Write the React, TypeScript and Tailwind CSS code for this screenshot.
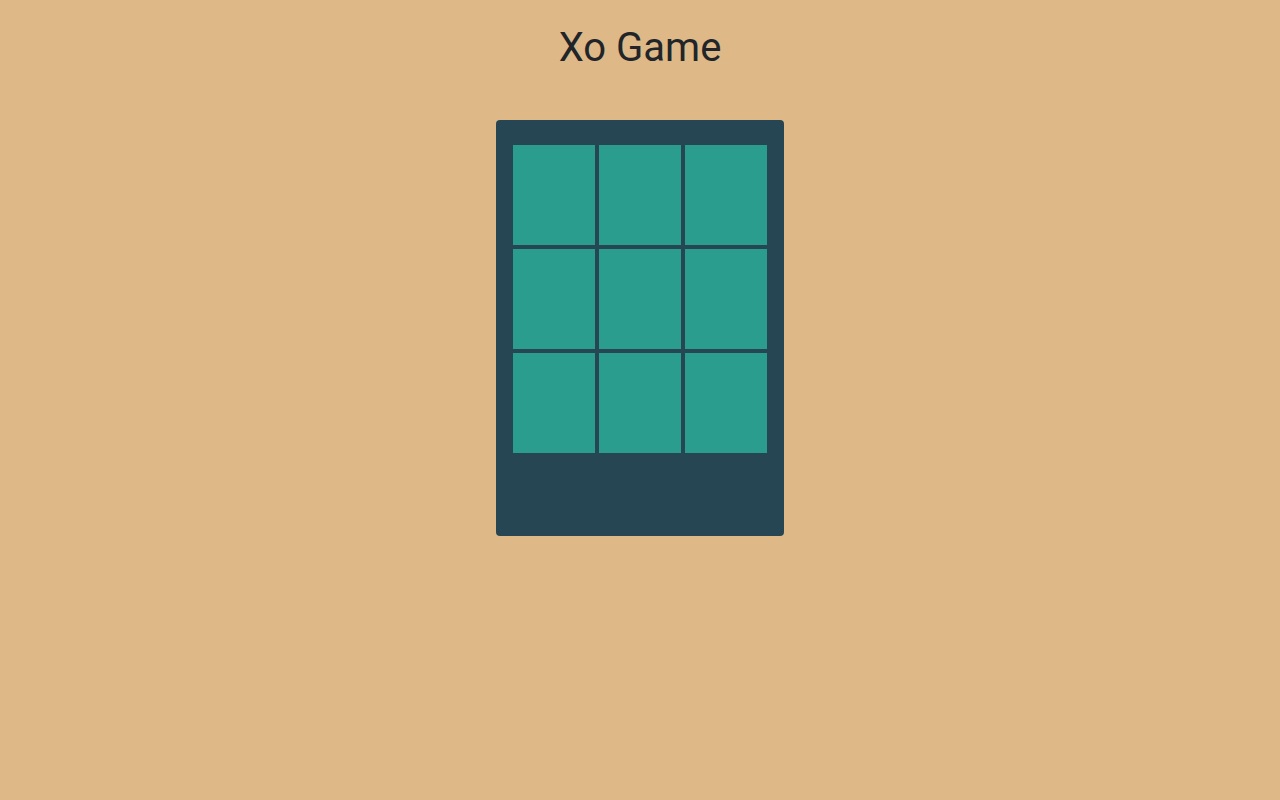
export default function App() {
  const cells = Array.from({ length: 9 })

  return (
    <div className="min-h-screen bg-[#deb887] font-['Roboto',sans-serif] text-[#212529]">
      <h1 className="pt-6 text-center text-[40px] leading-[48px] font-normal">Xo Game</h1>

      <div className="mt-12 flex justify-center">
        <div className="w-[288px] rounded bg-[#264653] px-[17px] pt-[25px] pb-[83px]">
          <div className="grid grid-cols-3 gap-1">
            {cells.map((_, i) => (
              <button key={i} className="h-[100px] w-[82px] bg-[#2a9d8f]" />
            ))}
          </div>
        </div>
      </div>
    </div>
  )
}
